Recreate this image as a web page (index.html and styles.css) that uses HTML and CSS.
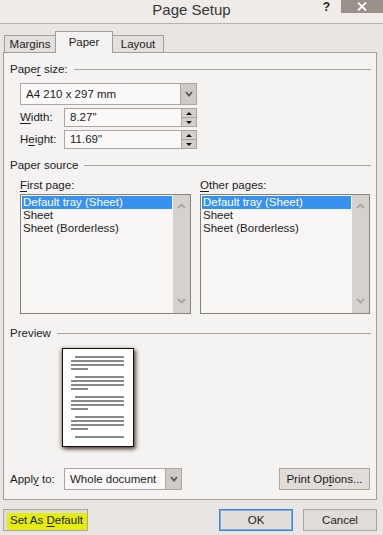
FILE: index.html
```html
<!DOCTYPE html>
<html lang="en">
<head>
    <meta charset="UTF-8">
    <meta name="viewport" content="width=device-width, initial-scale=1.0">
    <title>Page Setup</title>
    <link rel="stylesheet" href="styles.css">
</head>
<body>
    <div class="dialog">
        <header class="titlebar">
            <span></span>
            <h1 class="title">Page Setup</h1>
            <div class="controls">
                <span class="help">?</span>
                <span class="close">
                    <svg width="10" height="9" viewBox="0 0 10 9"><path d="M1 0.5 L9 8.5 M9 0.5 L1 8.5" stroke="#fff" stroke-width="1.8"/></svg>
                </span>
            </div>
        </header>

        <div class="tabs">
            <div class="tab">Margins</div>
            <div class="tab active">Paper</div>
            <div class="tab">Layout</div>
        </div>

        <div class="panel">
            <div class="group-title"><span>Pape<u>r</u> size:</span></div>
            <div class="select paper-size">
                <span class="value">A4 210 x 297 mm</span>
                <span class="drop"><svg width="8" height="6" viewBox="0 0 8 6"><path d="M1 1 L4 4.5 L7 1" fill="none" stroke="#5c5753" stroke-width="1.8"/></svg></span>
            </div>
            <div class="field">
                <label><u>W</u>idth:</label>
                <div class="spin">
                    <span class="value">8.27"</span>
                    <span class="spinner"><i class="up"></i><i class="down"></i></span>
                </div>
            </div>
            <div class="field">
                <label>H<u>e</u>ight:</label>
                <div class="spin">
                    <span class="value">11.69"</span>
                    <span class="spinner"><i class="up"></i><i class="down"></i></span>
                </div>
            </div>

            <div class="group-title source"><span>Paper source</span></div>
            <div class="sources">
                <div class="source-col">
                    <div class="col-label"><u>F</u>irst page:</div>
                    <div class="listbox">
                        <ul>
                            <li class="selected">Default tray (Sheet)</li>
                            <li>Sheet</li>
                            <li>Sheet (Borderless)</li>
                        </ul>
                        <div class="scrollbar">
                            <svg width="9" height="6" viewBox="0 0 9 6"><path d="M1 5 L4.5 1.5 L8 5" fill="none" stroke="#aca6a2" stroke-width="1.8"/></svg>
                            <svg width="9" height="6" viewBox="0 0 9 6"><path d="M1 1 L4.5 4.5 L8 1" fill="none" stroke="#aca6a2" stroke-width="1.8"/></svg>
                        </div>
                    </div>
                </div>
                <div class="source-col">
                    <div class="col-label"><u>O</u>ther pages:</div>
                    <div class="listbox">
                        <ul>
                            <li class="selected">Default tray (Sheet)</li>
                            <li>Sheet</li>
                            <li>Sheet (Borderless)</li>
                        </ul>
                        <div class="scrollbar">
                            <svg width="9" height="6" viewBox="0 0 9 6"><path d="M1 5 L4.5 1.5 L8 5" fill="none" stroke="#aca6a2" stroke-width="1.8"/></svg>
                            <svg width="9" height="6" viewBox="0 0 9 6"><path d="M1 1 L4.5 4.5 L8 1" fill="none" stroke="#aca6a2" stroke-width="1.8"/></svg>
                        </div>
                    </div>
                </div>
            </div>

            <div class="group-title preview-title"><span>Preview</span></div>
            <div class="preview">
                <svg width="70" height="97" viewBox="0 0 70 97">
                    <g stroke="#151515" stroke-width="1.2">
                        <path d="M12 8 H61 M8 12 H61 M8 16 H61 M8 20 H25"/>
                        <path d="M12 28 H61 M8 32 H61 M8 36 H61 M8 40 H25"/>
                        <path d="M12 48 H61 M8 52 H61 M8 56 H61 M8 60 H25"/>
                        <path d="M12 68 H61 M8 72 H61 M8 76 H61 M8 80 H25"/>
                        <path d="M12 88 H61"/>
                    </g>
                </svg>
            </div>

            <div class="apply-row">
                <label>Appl<u>y</u> to:</label>
                <div class="select apply">
                    <span class="value">Whole document</span>
                    <span class="drop"><svg width="8" height="6" viewBox="0 0 8 6"><path d="M1 1 L4 4.5 L7 1" fill="none" stroke="#5c5753" stroke-width="1.8"/></svg></span>
                </div>
                <button class="btn options">Print Op<u>t</u>ions...</button>
            </div>
        </div>

        <div class="footer">
            <button class="btn default">Set As <u>D</u>efault</button>
            <button class="btn ok">OK</button>
            <button class="btn">Cancel</button>
        </div>
    </div>
</body>
</html>
```

FILE: styles.css
```css
* {
    margin: 0;
    padding: 0;
    box-sizing: border-box;
}

body {
    background: #e8e5e2;
    font-family: 'Liberation Sans', Arial, sans-serif;
    font-size: 11.5px;
    color: #1c1c1c;
}

u {
    text-underline-offset: 2px;
}

.dialog {
    width: 383px;
    height: 535px;
}

/* title bar */
.titlebar {
    display: grid;
    grid-template-columns: 1fr auto 1fr;
    height: 24px;
    border-bottom: 1px solid #b8b3ae;
    background: #eeebe8;
}

.title {
    font-size: 15px;
    font-weight: normal;
    color: #363636;
    line-height: 20px;
}

.controls {
    justify-self: end;
    display: flex;
    align-items: flex-start;
}

.help {
    font-weight: bold;
    font-size: 12px;
    line-height: 14px;
    color: #222;
    margin-right: 11px;
}

.close {
    width: 42px;
    height: 13px;
    background: #9a918b;
    display: flex;
    align-items: center;
    justify-content: center;
}

/* tabs */
.tabs {
    display: flex;
    align-items: flex-end;
    height: 21px;
    margin-top: 7px;
    padding-left: 4px;
}

.tab {
    height: 17px;
    line-height: 16px;
    text-align: center;
    width: 52px;
    border: 1px solid #a39d98;
    border-bottom: none;
    background: #e3e0dd;
}

.tab + .tab {
    margin-left: -1px;
}

.tab.active {
    position: relative;
    height: 22px;
    width: 58px;
    line-height: 20px;
    margin-bottom: -1px;
    background: #f5f3f1;
    z-index: 1;
}

/* panel */
.panel {
    width: 374px;
    height: 448px;
    margin-left: 3px;
    border: 1px solid #a39d98;
    background: #f5f3f1;
    padding: 9px 5px 0 6px;
}

.group-title {
    display: flex;
    align-items: center;
    gap: 6px;
    height: 14px;
    line-height: 14px;
}

.group-title::after {
    content: "";
    flex: 1;
    height: 1px;
    background: #aaa49f;
}

.select {
    display: flex;
    height: 22px;
    border: 1px solid #aaa5a0;
    background: #faf9f8;
}

.select .value {
    flex: 1;
    line-height: 20px;
    padding-left: 5px;
}

.select .drop {
    width: 16px;
    background: #cfcac6;
    border-left: 1px solid #b0aaa5;
    display: flex;
    align-items: center;
    justify-content: center;
}

.paper-size {
    width: 177px;
    margin: 7px 0 0 10px;
}

.field {
    display: flex;
    margin: 3px 0 0 10px;
}

.field label,
.apply-row label {
    width: 44px;
    line-height: 19px;
}

.spin {
    display: flex;
    width: 133px;
    height: 19px;
    border: 1px solid #aaa5a0;
    background: #faf9f8;
}

.spin .value {
    flex: 1;
    line-height: 17px;
    padding-left: 5px;
}

.spinner {
    width: 15px;
    display: flex;
    flex-direction: column;
    background: #d3cfcb;
    border-left: 1px solid #b0aaa5;
}

.spinner i {
    flex: 1;
    display: flex;
    align-items: center;
    justify-content: center;
}

.spinner i + i {
    border-top: 1px solid #aaa5a0;
}

.spinner i::before {
    content: "";
    border-left: 3px solid transparent;
    border-right: 3px solid transparent;
}

.spinner .up::before {
    border-bottom: 3px solid #111;
}

.spinner .down::before {
    border-top: 3px solid #111;
}

.group-title.source {
    margin-top: 9px;
}

.sources {
    display: grid;
    grid-template-columns: 171px 170px;
    gap: 9px;
    margin: 6px 0 0 10px;
}

.col-label {
    line-height: 14px;
    margin-bottom: 2px;
}

.listbox {
    display: flex;
    height: 120px;
    border: 1px solid #858079;
    background: #f7f6f5;
}

.listbox ul {
    flex: 1;
    list-style: none;
    padding: 1px 1px 0;
}

.listbox li {
    height: 13px;
    line-height: 13px;
    padding-left: 1px;
}

.listbox li.selected {
    background: #3791ee;
    color: #fff;
}

.scrollbar {
    width: 17px;
    background: #d5d1cd;
    display: flex;
    flex-direction: column;
    justify-content: space-between;
    align-items: center;
    padding: 8px 0 9px;
}

.preview-title {
    margin-top: 12px;
}

.preview {
    margin: 8px 0 0 52px;
    width: 72px;
    height: 99px;
    border: 1px solid #111;
    background: #fff;
    box-shadow: 2px 2px 4px rgba(70, 55, 45, 0.85), -1px 1px 4px rgba(70, 55, 45, 0.55);
}

.preview svg {
    display: block;
}

.apply-row {
    display: flex;
    align-items: center;
    margin-top: 21px;
}

.apply-row label {
    width: 54px;
}

.apply {
    width: 118px;
}

.btn {
    font-family: inherit;
    font-size: 11.5px;
    color: #1c1c1c;
    height: 22px;
    border: 1px solid #aba59f;
    background: #e0ddd9;
}

.options {
    width: 91px;
    margin-left: auto;
    margin-right: 1px;
}

/* bottom buttons */
.footer {
    display: flex;
    gap: 10px;
    margin-top: 9px;
    padding: 0 6px 0 3px;
}

.footer .btn {
    width: 74px;
}

.footer .default {
    width: 85px;
    margin-right: auto;
    text-align: left;
    padding-left: 6px;
    background: #e4ec12;
    box-shadow: inset 3px 3px 0 #e0ddd9;
}

.footer .ok {
    border-color: #3b80d6;
    box-shadow: inset 0 0 0 1px #7fafe6;
}
```
